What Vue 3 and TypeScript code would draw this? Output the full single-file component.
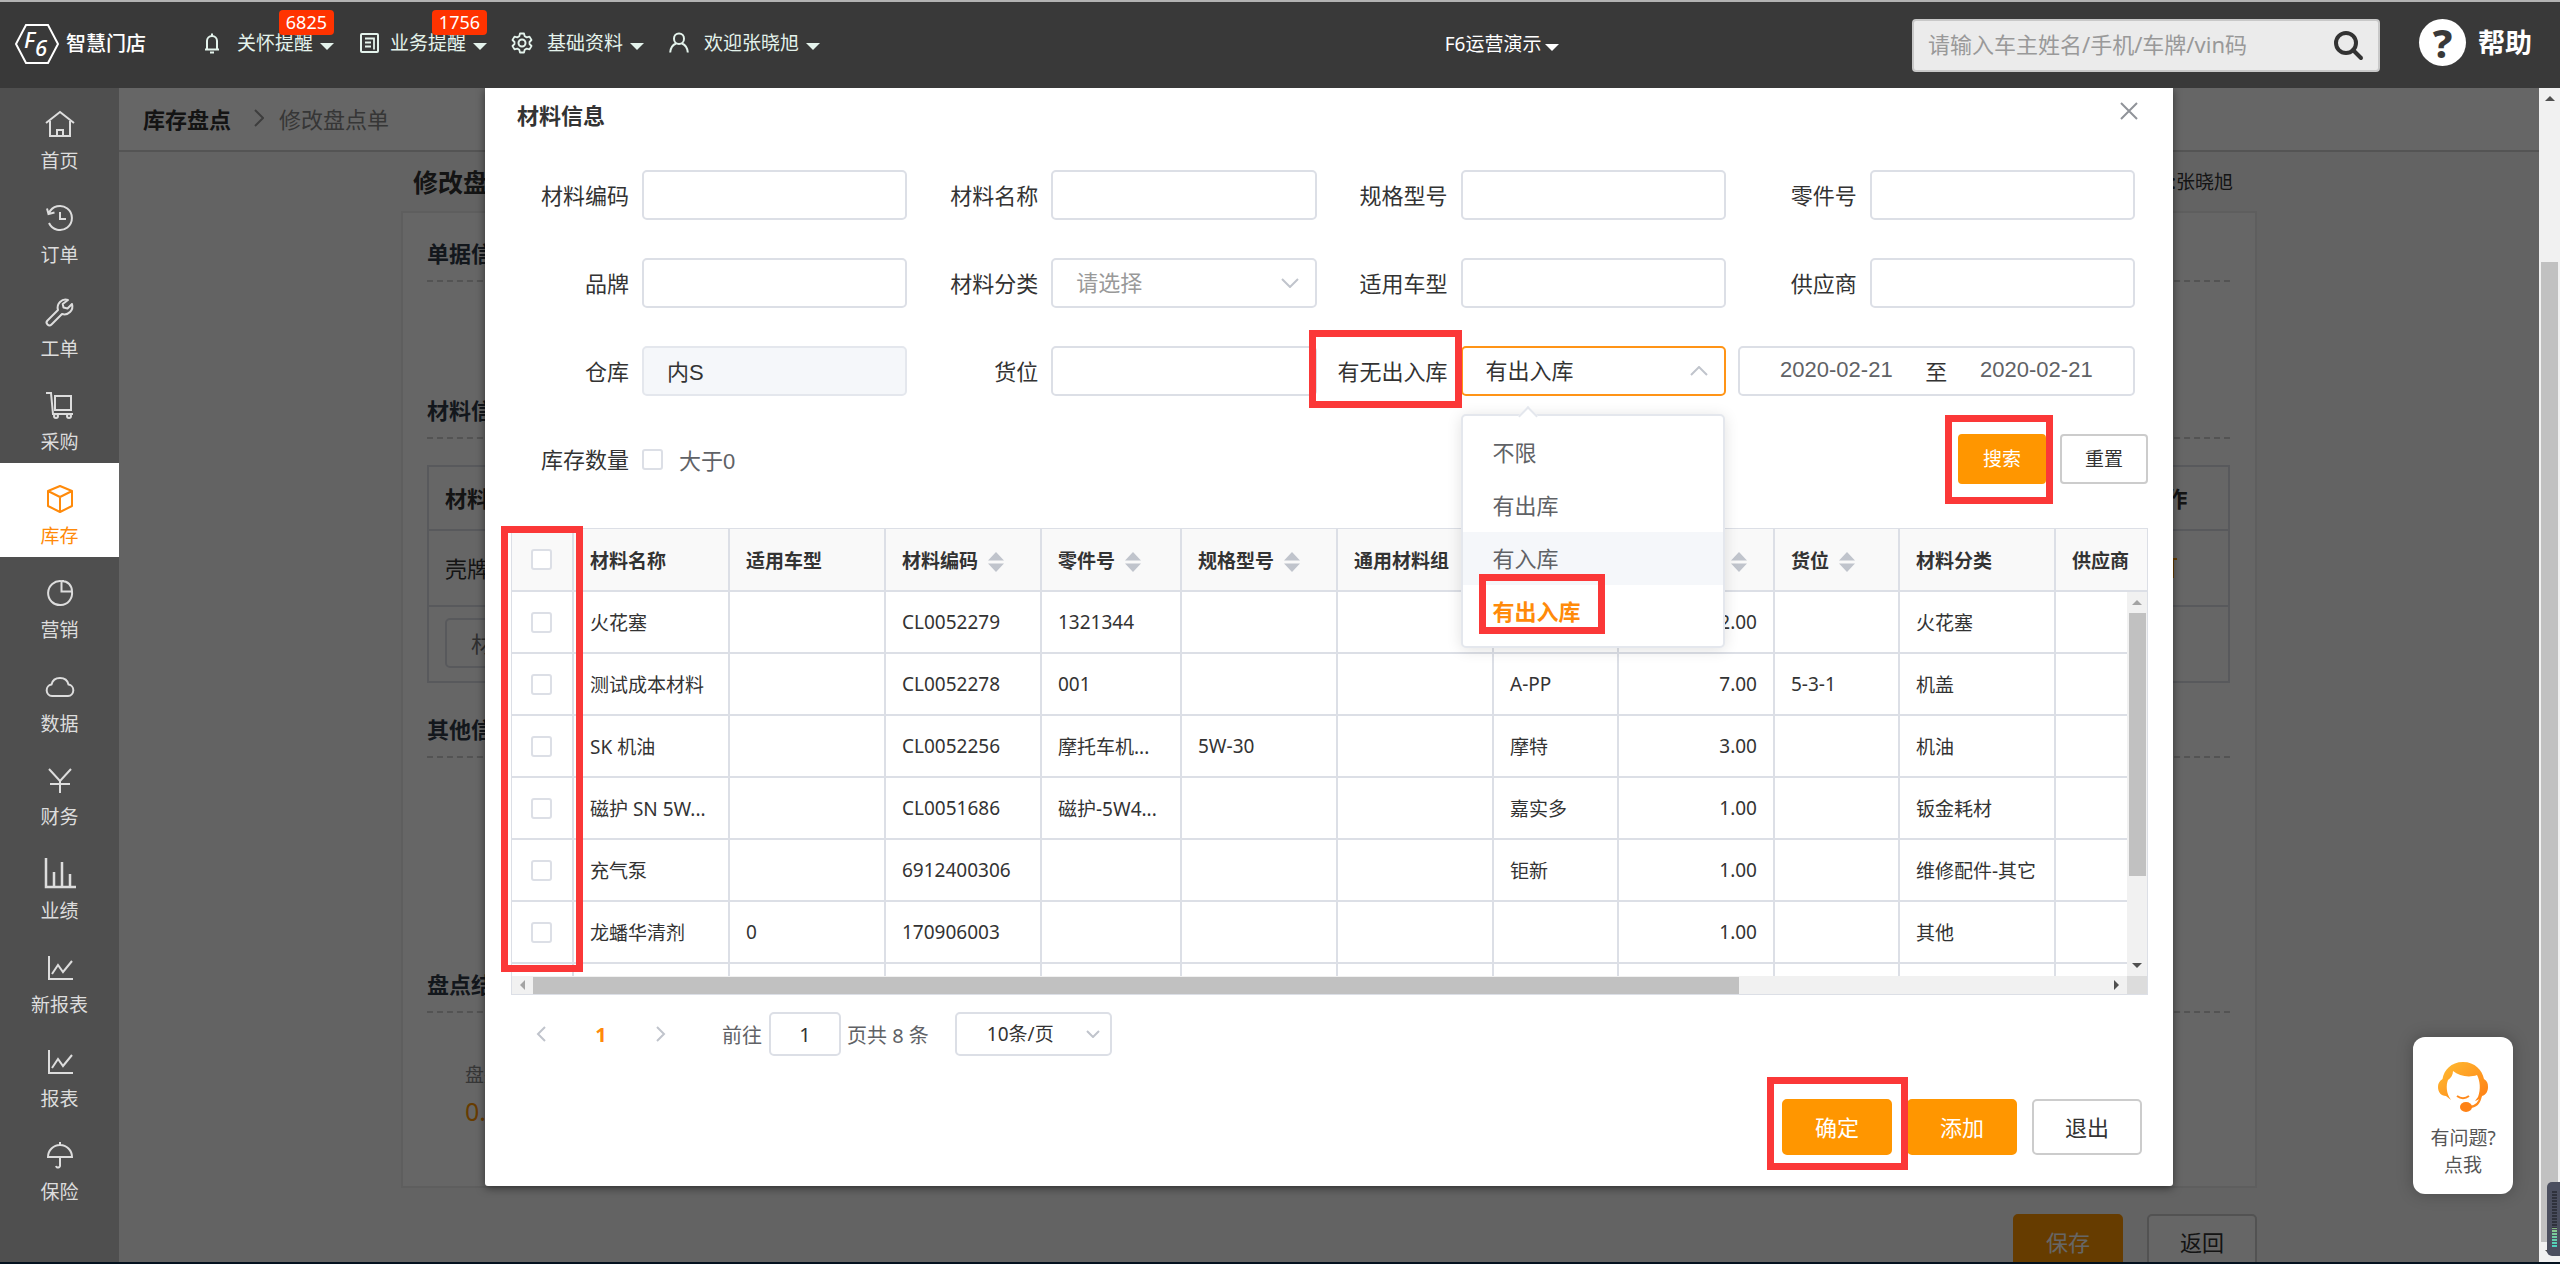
<script setup lang="ts">
import { ref } from 'vue'

interface TopItem { key: string; label: string; badge?: string }
interface SideItem { key: string; label: string; active?: boolean }
interface Column { key: keyof Row; label: string; width?: number; sortable?: boolean; numeric?: boolean }
interface Row {
  name: string; car: string; code: string; part: string; spec: string; group: string
  brand: string; qty: string; slot: string; kind: string; vendor: string
}

const topItems: TopItem[] = [
  { key: 'bell', label: '关怀提醒', badge: '6825' },
  { key: 'doc', label: '业务提醒', badge: '1756' },
  { key: 'gear', label: '基础资料' },
  { key: 'user', label: '欢迎张晓旭' },
]

const sideItems: SideItem[] = [
  { key: 'home', label: '首页' },
  { key: 'history', label: '订单' },
  { key: 'wrench', label: '工单' },
  { key: 'cart', label: '采购' },
  { key: 'box', label: '库存', active: true },
  { key: 'pie', label: '营销' },
  { key: 'cloud', label: '数据' },
  { key: 'yen', label: '财务' },
  { key: 'bars', label: '业绩' },
  { key: 'line', label: '新报表' },
  { key: 'line', label: '报表' },
  { key: 'umbrella', label: '保险' },
]

const columns: Column[] = [
  { key: 'name', label: '材料名称', width: 156 },
  { key: 'car', label: '适用车型', width: 156 },
  { key: 'code', label: '材料编码', width: 156, sortable: true },
  { key: 'part', label: '零件号', width: 140, sortable: true },
  { key: 'spec', label: '规格型号', width: 156, sortable: true },
  { key: 'group', label: '通用材料组', width: 156 },
  { key: 'brand', label: '品牌', width: 125 },
  { key: 'qty', label: '库存数量', width: 156, sortable: true, numeric: true },
  { key: 'slot', label: '货位', width: 125, sortable: true },
  { key: 'kind', label: '材料分类', width: 156 },
  { key: 'vendor', label: '供应商' },
]

const blank: Row = { name: '', car: '', code: '', part: '', spec: '', group: '', brand: '', qty: '', slot: '', kind: '', vendor: '' }
const rows: Row[] = [
  { ...blank, name: '火花塞', code: 'CL0052279', part: '1321344', qty: '2.00', kind: '火花塞' },
  { ...blank, name: '测试成本材料', code: 'CL0052278', part: '001', brand: 'A-PP', qty: '7.00', slot: '5-3-1', kind: '机盖' },
  { ...blank, name: 'SK 机油', code: 'CL0052256', part: '摩托车机...', spec: '5W-30', brand: '摩特', qty: '3.00', kind: '机油' },
  { ...blank, name: '磁护 SN 5W...', code: 'CL0051686', part: '磁护-5W4...', brand: '嘉实多', qty: '1.00', kind: '钣金耗材' },
  { ...blank, name: '充气泵', code: '6912400306', brand: '钜新', qty: '1.00', kind: '维修配件-其它' },
  { ...blank, name: '龙蟠华清剂', car: '0', code: '170906003', qty: '1.00', kind: '其他' },
  { ...blank },
]

const options = ['不限', '有出库', '有入库', '有出入库']
const movement = ref('有出入库')
const hovered = ref('有入库')
const category = ref('')
const warehouse = ref('内S')
const startDate = ref('2020-02-21')
const endDate = ref('2020-02-21')
const pageNo = ref('1')
const pageSize = ref('10条/页')
</script>

<template>
  <div class="app">
    <header class="top">
      <a class="logo" href="#">
        <svg width="46" height="42" viewBox="0 0 46 42" fill="none" stroke="#fff" stroke-width="2">
          <path d="M12 2h22l10 19-10 19H12L2 21z" />
          <text x="10" y="25" class="mark">F</text>
          <text x="21" y="33" class="mark">6</text>
        </svg>
        <span>智慧门店</span>
      </a>
      <nav class="topnav">
        <a v-for="item in topItems" :key="item.key" href="#" class="topitem" :class="item.key">
          <svg width="22" height="22" viewBox="0 0 22 22" fill="none" stroke="currentColor" stroke-width="2">
            <template v-if="item.key === 'bell'">
              <path d="M4 17.500h14M6 17V9a5 5 0 0 1 10 0v8M11 1.500V4M9 20.500h4" />
            </template>
            <template v-else-if="item.key === 'doc'">
              <rect x="3" y="2" width="17" height="18" rx="1" />
              <path d="M7 6.500h9v11M7 10.500h6M7 14.500h6" stroke-width="1.800" />
            </template>
            <template v-else-if="item.key === 'gear'">
              <circle cx="11" cy="11" r="3.500" />
              <path d="M9 1.500h4l.7 2.800 2 1.100 2.800-.8 2 3.400-2 2v2l2 2-2 3.400-2.800-.8-2 1.100-.7 2.800H9l-.7-2.800-2-1.100-2.800.8-2-3.400 2-2v-2l-2-2 2-3.400 2.800.8 2-1.100z" stroke-width="1.800" stroke-linejoin="round" />
            </template>
            <template v-else>
              <path d="M11 1.500c-3 0-5 2.200-5 5.200C6 10 8.300 12 11 12s5-2 5-5.300c0-3-2-5.200-5-5.200zM8 11.500c-3.500 1.500-5.500 4.500-5.800 9M14 11.500c3.500 1.500 5.500 4.500 5.800 9" />
            </template>
          </svg>
          <span>{{ item.label }}</span>
          <i class="caret"></i>
          <b v-if="item.badge" class="badge">{{ item.badge }}</b>
        </a>
      </nav>
      <div class="tenant"><a href="#" class="tenantlink">F6运营演示<i class="caret"></i></a></div>
      <form class="search" @submit.prevent>
        <input type="text" aria-label="搜索" placeholder="请输入车主姓名/手机/车牌/vin码" />
        <button type="submit" aria-label="查询">
          <svg width="32" height="32" viewBox="0 0 32 32" fill="none" stroke="#333" stroke-width="4">
            <circle cx="14" cy="14" r="10" /><path d="M21 21l8 8" stroke-linecap="round" />
          </svg>
        </button>
      </form>
      <a class="help" href="#">
        <span class="helpmark">?</span>
        <span>帮助</span>
      </a>
    </header>

    <div class="body">
      <nav class="side">
        <a v-for="item in sideItems" :key="item.label" href="#" class="sideitem" :class="{ active: item.active }">
          <svg width="32" height="32" viewBox="0 0 32 32" fill="none" stroke="currentColor" stroke-width="2">
            <path v-if="item.key === 'home'" d="M2 15 16 4l14 11M6 13v15h20V13M13 28v-6h6v6" />
            <g v-else-if="item.key === 'history'">
              <path d="M5 11a12 12 0 1 1 0 10M3 6.500 4.500 12l6-1.500M16 10v7h6" />
            </g>
            <path v-else-if="item.key === 'wrench'" d="M24 4a8 8 0 0 0-10 10L3.500 24.500a2.800 2.800 0 0 0 4 4L18 18A8 8 0 0 0 28 8l-4.500 4.500-4-1-.8-3.500z" stroke-linejoin="round" />
            <g v-else-if="item.key === 'cart'">
              <path d="M2 4h5l2 21h20M11 7h16v14H11z" />
              <circle cx="12" cy="27" r="2" /><circle cx="25" cy="27" r="2" />
            </g>
            <path v-else-if="item.key === 'box'" d="M16 3 28 8v15l-12 6-12-6V8zM4 8l12 6 12-6M16 14v15" stroke-linejoin="round" />
            <path v-else-if="item.key === 'pie'" d="M17.500 4.200A12 12 0 1 0 28 14.500H17.500zM20 4h-2.500M28 14.500C28 8.500 24 4 17.500 4" />
            <path v-else-if="item.key === 'cloud'" d="M8 25a5.800 5.800 0 0 1-.5-11.500C8.500 9 12 7 16 7s7.500 2 8.500 6.500A5.800 5.800 0 0 1 24 25z" />
            <path v-else-if="item.key === 'yen'" d="M5 5l11 12L27 5M16 17v12M6 20h20" />
            <path v-else-if="item.key === 'bars'" d="M2 0v29h30M10 14v15M18 4v25M26 16v13" stroke-width="2.500" />
            <path v-else-if="item.key === 'line'" d="M5 4v23h24M8 22l6-9 5 7 9-11" />
            <path v-else d="M4 18a12 12 0 0 1 24 0zM16 6V3M16 18v8a2 2 0 0 1-4 1" />
          </svg>
          <span>{{ item.label }}</span>
        </a>
      </nav>

      <main class="main">
        <div class="crumbs">
          <a href="#">库存盘点</a>
          <svg width="10" height="18" viewBox="0 0 10 18" fill="none" stroke="#999" stroke-width="2"><path d="M1 1l8 8-8 8" /></svg>
          <span>修改盘点单</span>
        </div>
        <div class="page">
          <div class="pagehead"><h1>修改盘点单</h1><span>盘点人:张晓旭</span></div>
          <div class="card">
            <section class="basic"><h2>单据信息</h2></section>
            <section class="goods">
              <h2>材料信息</h2>
              <table>
                <thead><tr><th>材料名称</th><th class="op">操作</th></tr></thead>
                <tbody>
                  <tr>
                    <td>壳牌机油</td>
                    <td class="op">
                      <svg width="22" height="22" viewBox="0 0 22 22" fill="none" stroke="#ff9600" stroke-width="2"><path d="M0 3h22M4 3v18h14V3" /></svg>
                    </td>
                  </tr>
                  <tr><td><input type="text" aria-label="材料" placeholder="材料名称" /></td><td></td></tr>
                </tbody>
              </table>
            </section>
            <section class="other"><h2>其他信息</h2></section>
            <section class="result">
              <h2>盘点结果</h2>
              <p>盘盈数量</p>
              <strong>0.00</strong>
            </section>
          </div>
          <div class="pagefoot">
            <button type="button" class="btn primary">保存</button>
            <button type="button" class="btn">返回</button>
          </div>
        </div>

        <div class="mask"></div>

        <div class="dialog" role="dialog" aria-label="材料信息">
          <div class="dialoghead">
            <h2>材料信息</h2>
            <button type="button" aria-label="关闭">
              <svg width="18" height="18" viewBox="0 0 18 18" stroke="#909399" stroke-width="2"><path d="M1 1l16 16M17 1 1 17" /></svg>
            </button>
          </div>

          <form class="filters" @submit.prevent>
            <div class="fields">
              <div class="field"><label for="f1">材料编码</label><input id="f1" type="text" /></div>
              <div class="field"><label for="f2">材料名称</label><input id="f2" type="text" /></div>
              <div class="field"><label for="f3">规格型号</label><input id="f3" type="text" /></div>
              <div class="field"><label for="f4">零件号</label><input id="f4" type="text" /></div>
              <div class="field"><label for="f5">品牌</label><input id="f5" type="text" /></div>
              <div class="field">
                <label for="f6">材料分类</label>
                <div class="pick">
                  <select id="f6" v-model="category" class="empty"><option value="">请选择</option></select>
                  <svg width="18" height="10" viewBox="0 0 18 10" fill="none" stroke="#c0c4cc" stroke-width="2"><path d="M1 1l8 8 8-8" /></svg>
                </div>
              </div>
              <div class="field"><label for="f7">适用车型</label><input id="f7" type="text" /></div>
              <div class="field"><label for="f8">供应商</label><input id="f8" type="text" /></div>
              <div class="field"><label for="f9">仓库</label><input id="f9" v-model="warehouse" type="text" disabled /></div>
              <div class="field"><label for="f10">货位</label><input id="f10" type="text" /></div>
              <div class="field">
                <label for="f11">有无出入库</label>
                <div class="pick">
                  <select id="f11" v-model="movement" class="open">
                    <option v-for="o in options" :key="o">{{ o }}</option>
                  </select>
                  <svg width="18" height="10" viewBox="0 0 18 10" fill="none" stroke="#c0c4cc" stroke-width="2"><path d="M1 9l8-8 8 8" /></svg>
                  <ul class="menu" role="listbox" aria-label="有无出入库">
                    <li
                      v-for="o in options" :key="o" role="option"
                      :class="{ hover: o === hovered, chosen: o === movement }"
                      :aria-selected="o === movement" @click="movement = o"
                    ><span :class="{ flagged: o === movement }">{{ o }}</span></li>
                  </ul>
                </div>
                <i class="flag flaglabel"></i>
              </div>
              <div class="daterange">
                <input v-model="startDate" type="text" aria-label="开始日期" />
                <span>至</span>
                <input v-model="endDate" type="text" aria-label="结束日期" />
              </div>
            </div>
            <div class="actions">
              <span class="caption">库存数量</span>
              <label class="more"><input type="checkbox" />大于0</label>
              <span class="flagged flagsearch"><button type="submit" class="btn small primary">搜索</button></span>
              <button type="reset" class="btn small">重置</button>
            </div>
          </form>

          <div class="grid">
            <div class="viewport">
              <table>
                <colgroup>
                  <col class="tick" />
                  <col v-for="c in columns" :key="c.key" :style="c.width ? { width: c.width + 'px' } : {}" />
                </colgroup>
                <thead>
                  <tr>
                    <th class="tick"><input type="checkbox" aria-label="全选" /></th>
                    <th v-for="c in columns" :key="c.key" :class="{ numeric: c.numeric }">
                      {{ c.label }}<svg v-if="c.sortable" width="16" height="20" viewBox="0 0 16 20" fill="#c0c4cc"><path d="M0 8.500 8 0l8 8.500zM0 11.500 8 20l8-8.500z" /></svg>
                    </th>
                  </tr>
                </thead>
                <tbody>
                  <tr v-for="(r, i) in rows" :key="i">
                    <td class="tick"><input type="checkbox" :aria-label="'选择' + r.name" /></td>
                    <td v-for="c in columns" :key="c.key" :class="{ numeric: c.numeric }">{{ r[c.key] }}</td>
                  </tr>
                </tbody>
              </table>
              <div class="vbar"><i class="arrow up"></i><i class="thumb"></i><i class="rest"></i><i class="arrow down"></i></div>
            </div>
            <div class="hbar"><i class="arrow left"></i><i class="thumb"></i><i class="rest"></i><i class="arrow right"></i><i class="corner"></i></div>
            <i class="flag flagticks"></i>
          </div>

          <div class="pager">
            <button type="button" aria-label="上一页"><svg width="10" height="16" viewBox="0 0 10 16" fill="none" stroke="#c0c4cc" stroke-width="2"><path d="M9 1 2 8l7 7" /></svg></button>
            <button type="button" class="current">1</button>
            <button type="button" aria-label="下一页"><svg width="10" height="16" viewBox="0 0 10 16" fill="none" stroke="#c0c4cc" stroke-width="2"><path d="M1 1l7 7-7 7" /></svg></button>
            <label for="goto" class="goto">前往</label>
            <input id="goto" v-model="pageNo" type="text" />
            <span>页共 8 条</span>
            <div class="pick">
              <select v-model="pageSize" aria-label="每页条数"><option>10条/页</option></select>
              <svg width="14" height="8" viewBox="0 0 14 8" fill="none" stroke="#c0c4cc" stroke-width="2"><path d="M1 1l6 6 6-6" /></svg>
            </div>
          </div>

          <div class="dialogfoot">
            <span class="flagged flagok"><button type="button" class="btn primary">确定</button></span>
            <button type="button" class="btn primary">添加</button>
            <button type="button" class="btn">退出</button>
          </div>
        </div>

        <a class="support" href="#">
          <svg width="50" height="50" viewBox="0 0 50 50">
            <defs>
              <linearGradient id="warm" x1="0" y1="0" x2="1" y2="1"><stop offset="0" stop-color="#ffbe33" /><stop offset="1" stop-color="#ff7d14" /></linearGradient>
            </defs>
            <path fill="url(#warm)" d="M25 0C13 0 6 8 4.500 17 1 19 0 22 0 25c0 5 3 9 8 9l5 4C8 31 8 23 10 18c3-2 5-5 5-9 6 5 16 7 24 4 3 6 4 14 1 22l-3 4c3-1 5-2 7-5 4-1 6-5 6-9s-1-6-4-8C44 8 37 0 25 0z" />
            <path fill="none" stroke="#ff8a1c" stroke-width="2" d="M43 33c-1 7-5 12-12 12M19 34c4 3 8 3 12 0" />
            <ellipse cx="28" cy="45" rx="6" ry="5" fill="#ff8216" />
          </svg>
          <span>有问题?<br />点我</span>
        </a>
      </main>

      <div class="pagebar"><i class="arrow up"></i><i class="rest"></i><i class="thumb"></i><i class="arrow down"></i><div class="meter"><i></i></div></div>
    </div>
    <div class="strip"></div>
  </div>
</template>

<style>
body { overflow: hidden; }
</style>

<style scoped>
* { box-sizing: border-box; }
.app {
  height: 100vh; display: flex; flex-direction: column; overflow: hidden;
  font-family: "Noto Sans", "Noto Sans CJK SC", sans-serif; font-size: 19px; color: #333;
}
a { color: inherit; text-decoration: none; }
h1, h2, p, ul { margin: 0; padding: 0; list-style: none; }
button, input, select { font: inherit; color: inherit; margin: 0; }
button { cursor: pointer; }
svg { display: block; flex: none; }
i { font-style: normal; display: block; flex: none; }

/* top bar */
.top {
  height: 88px; flex: none; display: flex; align-items: center; padding: 0 28px 0 14px;
  background: #393939; border-top: 2px solid #b3b3b3; color: #fff;
}
.logo { display: flex; align-items: center; gap: 6px; font-size: 20px; line-height: 30px; font-weight: 500; width: 187px; padding-bottom: 2px; }
.mark { font-size: 22px; font-style: italic; stroke: none; fill: #fff; }
.topnav { display: flex; gap: 24px; color: #e4f3ec; padding-bottom: 4px; }
.topitem { position: relative; display: flex; align-items: center; line-height: 28px; white-space: nowrap; }
.topitem svg { margin-right: 14px; }
.topitem.doc svg { margin-right: 10px; }
.caret { border: 7px solid transparent; border-top-color: currentColor; border-bottom: 0; margin: 6px 0 0 7px; }
.badge {
  position: absolute; right: 0; bottom: 22px; height: 25px; padding: 0 7px; border-radius: 4px;
  background: #ff3300; color: #fff; font-size: 18px; line-height: 25px; font-weight: 400;
}
.tenant { flex: 1; display: flex; justify-content: center; padding: 0 0 2px 272px; }
.tenantlink { display: flex; align-items: center; line-height: 28px; white-space: nowrap; }
.tenantlink .caret { margin-left: 4px; }
.search {
  width: 468px; height: 53px; display: flex; align-items: center; padding: 0 14px;
  background: #ebebeb; border: 2px solid #c8c8c8; border-radius: 4px;
}
.search input { flex: 1; min-width: 0; border: 0; padding: 0 0 2px; background: none; font-size: 22px; outline: 0; color: #333; }
.search input::placeholder { color: #999; opacity: 1; }
.search button { border: 0; background: none; padding: 0; }
.help { display: flex; align-items: center; gap: 12px; margin-left: 39px; padding-bottom: 6px; font-size: 27px; line-height: 47px; font-weight: 700; }
.helpmark { width: 47px; height: 47px; border-radius: 50%; background: #fff; color: #393939; text-align: center; font-size: 40px; font-weight: 800; }

/* side menu */
.body { flex: 1; min-height: 0; display: flex; }
.side { width: 119px; flex: none; display: flex; flex-direction: column; background: #4f4f4f; color: #ddd; padding-bottom: 49px; }
.sideitem { flex: 1; display: flex; flex-direction: column; align-items: center; padding-top: 20px; gap: 8px; line-height: 26px; }
.sideitem.active { background: #fff; color: #ff8a0a; }

/* page behind the dialog */
.main { position: relative; flex: 1; min-width: 0; overflow: hidden; background: #f8f8f8; }
.crumbs { height: 64px; display: flex; align-items: center; padding: 0 0 2px 24px; background: #fff; border-bottom: 2px solid #d3d3d3; font-size: 22px; }
.crumbs a { font-weight: 700; }
.crumbs svg { margin: 0 15px 0 23px; }
.crumbs span { color: #888; }
.page { padding: 0 282px; }
.pagehead { height: 59px; display: flex; align-items: center; justify-content: space-between; padding: 0 24px 2px 12px; }
.pagehead h1 { font-size: 25px; }
.card { border: 2px solid #ebebeb; background: #fff; padding: 26px 25px 0 24px; }
.card h2 { height: 43px; font-size: 22px; line-height: 28px; border-bottom: 2px dashed #d0d0d0; color: #303a48; }
.basic { height: 157px; }
.goods { height: 319px; }
.other { height: 255px; }
.result { height: 216px; }
.result p { padding: 48px 0 0 38px; line-height: 28px; color: #888; }
.result strong { display: block; padding-left: 38px; font-size: 25px; line-height: 44px; font-weight: 400; color: #ff9600; }
.card table { width: 100%; margin-top: 26px; border-collapse: collapse; font-size: 22px; }
.card th, .card td { height: 76px; padding: 0 16px 2px; border-top: 2px solid #dcdfe6; border-bottom: 2px solid #dcdfe6; text-align: left; }
.card th { height: 64px; }
.card table { border: 2px solid #dcdfe6; }
.card .op { width: 126px; text-align: center; }
.card .op svg { margin: 0 auto; }
.card td input { width: 240px; height: 50px; padding: 0 24px; border: 2px solid #dcdfe6; border-radius: 5px; }
.pagefoot { display: flex; justify-content: flex-end; gap: 24px; padding-top: 26px; }
.mask { position: absolute; inset: 0; background: rgba(0, 0, 0, .6); }

/* buttons */
.btn { display: block; width: 110px; height: 56px; padding: 0 0 3px; border: 2px solid #ccc; border-radius: 5px; background: #fff; font-size: 22px; }
.btn.small { width: 88px; height: 50px; font-size: 19px; border-radius: 4px; }
.btn.primary { background: #ff9600; border-color: #ff9600; color: #fff; }

/* dialog */
.dialog {
  position: absolute; top: 0; left: 366px; right: 366px; padding: 0 25px 31px 26px;
  background: #fff; border-radius: 0 0 3px 3px; box-shadow: 0 2px 8px rgba(0, 0, 0, .5);
}
.dialoghead { display: flex; justify-content: space-between; padding: 0 10px 0 6px; }
.dialoghead h2 { font-size: 22px; line-height: 54px; }
.dialoghead button { align-self: flex-start; margin-top: 14px; border: 0; padding: 0; background: none; }
.filters { margin: 28px 0 0 -13px; font-size: 22px; }
.fields { display: grid; grid-template-columns: repeat(4, minmax(0, 1fr)); row-gap: 38px; margin-right: 13px; }
.field { position: relative; display: flex; align-items: center; }
.field label, .caption { width: 144px; flex: none; padding: 0 13px 3px 0; text-align: right; white-space: nowrap; }
.field > input, .pick { flex: 1; min-width: 0; }
.field > input, .pick select {
  height: 50px; padding: 0 23px 2px; border: 2px solid #dcdfe6; border-radius: 5px; background: #fff; outline: 0;
}
.field > input:disabled { background: #f5f7fa; border-color: #e4e7ed; color: #333; font-family: "Liberation Sans", "Noto Sans CJK SC", sans-serif; }
.pick { position: relative; }
.pick select { width: 100%; appearance: none; }
.pick select.empty { color: #999; }
.pick select.open { border-color: #ff9416; }
.pick > svg { position: absolute; right: 18px; top: 20px; pointer-events: none; }
.menu {
  position: absolute; z-index: 3; top: 68px; left: 0; right: 1px; padding: 10px 0 8px;
  background: #fff; border: 2px solid #e4e7ed; border-radius: 5px; box-shadow: 0 2px 15px rgba(0, 0, 0, .12);
}
.menu::before {
  content: ""; position: absolute; left: 58px; top: -7px; width: 12px; height: 12px;
  background: #fff; border: solid #e4e7ed; border-width: 2px 0 0 2px; transform: rotate(45deg);
}
.menu li { position: relative; padding-left: 30px; line-height: 53px; color: #606266; }
.menu li.hover { background: #f5f7fa; }
.menu li.chosen { color: #ff8a0a; font-weight: 700; }
.daterange {
  display: flex; align-items: center; justify-content: center; height: 50px; margin-left: 12px;
  border: 2px solid #dcdfe6; border-radius: 5px;
}
.daterange input {
  width: 136px; border: 0; padding: 0 0 3px; background: none; text-align: center; color: #606266;
  font-family: "Liberation Sans", sans-serif;
}
.daterange span { width: 64px; padding-bottom: 3px; text-align: center; }
.actions { display: flex; align-items: center; margin-top: 38px; }
.more { display: flex; align-items: center; gap: 16px; margin-right: auto; color: #606266; font-family: "Liberation Sans", "Noto Sans CJK SC", sans-serif; }
.actions .flagged { margin-right: 14px; }
input[type="checkbox"] { appearance: none; display: block; width: 21px; height: 21px; border: 2px solid #dcdfe6; border-radius: 3px; background: #fff; }

/* highlight frames */
.flag, .flagged::after { position: absolute; border: 7px solid #fb3838; pointer-events: none; z-index: 4; }
.flagged { position: relative; display: inline-block; }
.flagged::after { content: ""; }
.flaglabel { left: -8px; top: -16px; width: 153px; height: 78px; }
.flagsearch::after { inset: -19px -7px -20px -13px; }
.menu .flagged::after { inset: -11px -24px 4px -14px; }
.flagok::after { inset: -22px -16px -15px -15px; }
.flagticks { left: -11px; top: -3px; width: 82px; height: 446px; }

/* data grid */
.grid { position: relative; margin-top: 44px; border: 1px solid #dcdfe6; }
.viewport { position: relative; height: 447px; overflow: hidden; }
.grid table { width: 100%; table-layout: fixed; border-collapse: separate; border-spacing: 0; }
.grid th, .grid td {
  height: 62px; padding: 0 0 0 16px; text-align: left; white-space: nowrap;
  border-right: 2px solid #dcdfe6; border-bottom: 2px solid #dcdfe6;
}
.grid th { height: 63px; background: #f9f9f9; }
.grid th:last-child { border-right: 0; }
.grid th svg { display: inline-block; vertical-align: -4px; margin: 0 10px; }
.grid .numeric { text-align: right; padding: 0 16px 0 0; }
.grid col.tick { width: 62px; }
.grid .tick { padding: 0 0 0 19px; }
.arrow { width: 0; height: 0; border: 5px solid transparent; }
.arrow.up { border-bottom-color: #505050; border-top: 0; }
.arrow.down { border-top-color: #505050; border-bottom: 0; }
.arrow.left { border-right-color: #a3a3a3; border-left: 0; }
.arrow.right { border-left-color: #505050; border-right: 0; }
.thumb { background: #c1c1c1; }
.vbar { position: absolute; top: 63px; right: 0; bottom: 0; width: 20px; padding: 0 1px; display: flex; flex-direction: column; align-items: center; background: #f1f1f1; }
.vbar .thumb { width: 17px; flex: 263; }
.vbar .rest { flex: 79; }
.vbar .arrow { margin: 8px 0; }
.vbar .arrow.up { border-bottom-color: #a3a3a3; }
.hbar { display: flex; align-items: center; height: 18px; background: #f1f1f1; }
.hbar .arrow { margin: 0 8px; }
.hbar .thumb { height: 17px; flex: 1207; }
.hbar .rest { flex: 367; }
.hbar .corner { width: 20px; height: 18px; background: #dcdcdc; }

/* pager */
.pager { display: flex; align-items: center; margin-top: 17px; padding-left: 12px; font-size: 20px; color: #606266; }
.pager button { width: 36px; height: 36px; padding: 0; border: 0; background: none; display: flex; align-items: center; justify-content: center; }
.pager .current { margin: 0 24px; color: #ff8a0a; font-weight: 700; }
.pager .goto { margin-left: 43px; }
.pager input { width: 72px; height: 44px; margin: 0 6px 0 7px; padding: 0; text-align: center; border: 2px solid #dcdfe6; border-radius: 5px; color: #333; outline: 0; }
.pager .pick { flex: none; width: 157px; margin-left: 26px; font-size: 19px; color: #333; }
.pager .pick select { height: 44px; padding: 0 30px; }
.pager .pick > svg { right: 12px; top: 18px; }
.dialogfoot { display: flex; justify-content: flex-end; gap: 15px; margin-top: 43px; padding-right: 6px; }

/* support card */
.support {
  position: absolute; right: 26px; bottom: 68px; width: 100px; height: 157px; padding-top: 25px; border-radius: 12px;
  display: flex; flex-direction: column; align-items: center; gap: 13px; background: #fff;
  box-shadow: 0 0 16px rgba(0, 0, 0, .25); text-align: center; line-height: 27px; color: #555;
}

/* page scroll bar */
.pagebar { position: relative; width: 21px; flex: none; display: flex; flex-direction: column; align-items: center; background: #f1f1f1; }
.pagebar .arrow { margin: 8px 0 7px; }
.pagebar .rest { flex: 154; }
.pagebar .thumb { flex: 981; width: 17px; }
.meter { position: absolute; right: 0; bottom: 6px; width: 13px; height: 74px; padding: 9px 3px 8px 5px; border-radius: 5px 0 0 5px; background: #4b4f5f; }
.meter i { height: 57px; background: repeating-linear-gradient(transparent 0 2px, #4b4f5f 2px 3px), linear-gradient(#2f323c 64%, #8fc98a 66%, #45d3c4); }
.strip { height: 2px; flex: none; background: #04121f; }
</style>
